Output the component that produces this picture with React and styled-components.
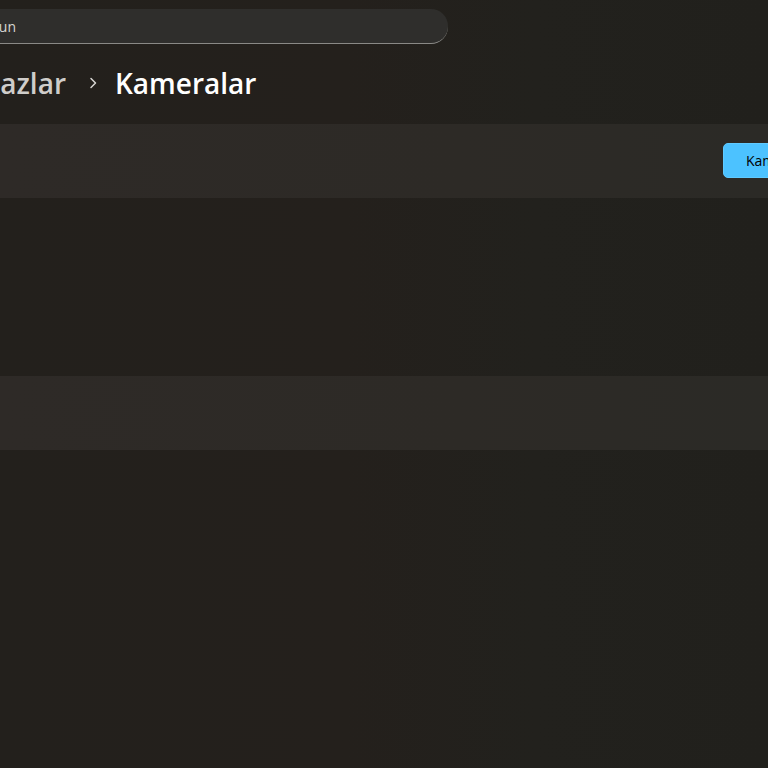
import React from 'react'
import styled, { createGlobalStyle } from 'styled-components'

const GlobalStyle = createGlobalStyle`
  html, body {
    margin: 0;
    padding: 0;
    background: #221f1b;
    font-family: "Open Sans", "Noto Sans", sans-serif;
    overflow: hidden;
  }
`

const Page = styled.main`
  width: 768px;
  height: 768px;
  background: linear-gradient(90deg, #23201c 0%, #24201c 45%, #22211d 70%, #21201c 100%);
  display: flex;
  flex-direction: column;
  overflow: hidden;
`

const SearchRow = styled.div`
  padding-top: 9px;
  display: flex;
`

const SearchBox = styled.div`
  width: 488px;
  height: 35px;
  margin-left: -40px;
  padding-left: 40px;
  box-sizing: border-box;
  background: #2f2e2c;
  border-radius: 0 17px 17px 0;
  border-bottom: 1px solid #8a8986;
  display: flex;
  align-items: center;
`

const Clip = styled.div`
  width: ${p => p.$w}px;
  margin-left: -40px;
  overflow: hidden;
  display: flex;
  justify-content: flex-end;
  white-space: nowrap;
`

const Placeholder = styled.span`
  font-size: 14px;
  color: #d6d4d1;
`

const Breadcrumb = styled.div`
  height: 79px;
  display: flex;
  align-items: center;
  padding-bottom: 2px;
  box-sizing: border-box;
`

const Crumb = styled.span`
  font-size: 28px;
  font-weight: 600;
  color: ${p => (p.$active ? '#ffffff' : '#cfcdca')};
`

const Chevron = styled.span`
  width: 49px;
  display: flex;
  justify-content: center;
  padding-left: 4px;
  box-sizing: border-box;
  color: #d8d6d3;
`

const Card = styled.section`
  height: 74px;
  background: linear-gradient(90deg, #2e2a27 0%, #2d2a26 60%, #2b2a26 100%);
  display: flex;
  align-items: center;
  justify-content: flex-end;
`

const Spacer = styled.div`
  height: ${p => p.$h}px;
`

const PrimaryButton = styled.button`
  width: 120px;
  height: 35px;
  margin-right: -75px;
  margin-bottom: 1px;
  background: #4cc2ff;
  border: 1px solid #5fcaff;
  border-radius: 5px;
  color: #000;
  font-family: "Open Sans", "Noto Sans", sans-serif;
  font-size: 14px;
  text-align: left;
  padding: 0 0 0 22px;
  white-space: nowrap;
  overflow: hidden;
`

const App = () => {
  return (
    <>
      <GlobalStyle />
      <Page>
        <SearchRow>
          <SearchBox>
            <Clip $w={56}>
              <Placeholder>Bir ayarı bulun</Placeholder>
            </Clip>
          </SearchBox>
        </SearchRow>
        <Breadcrumb>
          <Clip $w={106}>
            <Crumb>Bluetooth ve cihazlar</Crumb>
          </Clip>
          <Chevron>
            <svg width="10" height="12" viewBox="0 0 10 12" fill="none">
              <path d="M3 1.5 L7.5 6 L3 10.5" stroke="currentColor" strokeWidth="1.5" strokeLinecap="round" strokeLinejoin="round" />
            </svg>
          </Chevron>
          <Crumb $active>Kameralar</Crumb>
        </Breadcrumb>
        <Spacer $h={1} />
        <Card>
          <PrimaryButton>Kamera ekle</PrimaryButton>
        </Card>
        <Spacer $h={178} />
        <Card />
      </Page>
    </>
  )
}

export default App
